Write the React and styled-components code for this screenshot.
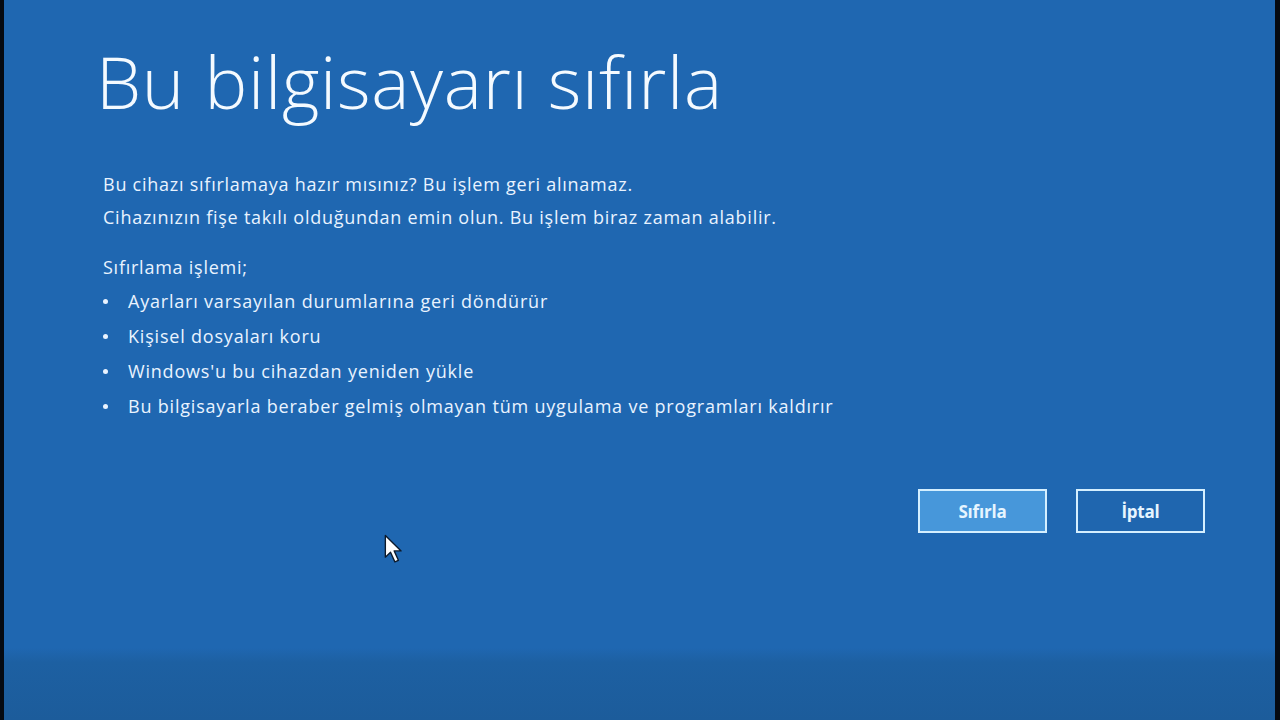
import React from "react";
import styled, { createGlobalStyle } from "styled-components";

const GlobalStyle = createGlobalStyle`
  html, body {
    margin: 0;
    padding: 0;
    background: #000;
  }
  body {
    font-family: "Open Sans", "Noto Sans", sans-serif;
  }
`;

const Frame = styled.div`
  width: 1280px;
  height: 720px;
  display: flex;
  background: #050a12;
  padding: 0 5px 0 4px;
  box-sizing: border-box;
  overflow: hidden;
`;

const Screen = styled.div`
  flex: 1;
  display: flex;
  flex-direction: column;
  background: linear-gradient(
    180deg,
    #1f67b1 0%,
    #1f67b1 90%,
    #1d60a2 92%,
    #1c5c9b 100%
  );
  color: #f2f8ff;
  padding: 36px 0 0 92px;
  position: relative;
`;

const Title = styled.h1`
  margin: 0;
  font-family: "Open Sans", sans-serif;
  font-weight: 300;
  font-size: 72px;
  line-height: 90px;
  letter-spacing: 0.7px;
  color: #f4faff;
`;

const Body = styled.div`
  display: flex;
  flex-direction: column;
  padding-left: 7px;
  margin-top: 42px;
  font-size: 18px;
  color: #e9f3ff;
`;

const Line = styled.p`
  margin: 0;
  line-height: 33px;
  letter-spacing: 0.75px;
`;

const Intro = styled(Line)`
  margin-top: 17px;
`;

const List = styled.ul`
  margin: 0;
  padding: 0;
  list-style: none;
  display: flex;
  flex-direction: column;
`;

const Item = styled.li`
  display: flex;
  align-items: center;
  line-height: 35px;
  letter-spacing: 0.8px;
  &::before {
    content: "";
    flex: none;
    width: 5px;
    height: 5px;
    border-radius: 50%;
    background: #e9f3ff;
    margin: 0 20px 0 0;
  }
`;

const Actions = styled.div`
  display: flex;
  justify-content: flex-end;
  gap: 29px;
  margin: 65px 70px 0 0;
`;

const Button = styled.button`
  width: 129px;
  height: 44px;
  box-sizing: border-box;
  border: 2px solid #d4efff;
  background: ${(p) => (p.$primary ? "#4797da" : "#1f66af")};
  color: #e6f5ff;
  font-family: "Open Sans", sans-serif;
  font-weight: 700;
  font-size: 17px;
  letter-spacing: -0.2px;
  padding: 0;
  cursor: default;
`;

const Pointer = styled.svg`
  position: absolute;
  left: 380px;
  top: 534px;
`;

const items = [
  "Ayarları varsayılan durumlarına geri döndürür",
  "Kişisel dosyaları koru",
  "Windows'u bu cihazdan yeniden yükle",
  "Bu bilgisayarla beraber gelmiş olmayan tüm uygulama ve programları kaldırır",
];

export default function App() {
  return (
    <>
      <GlobalStyle />
      <Frame>
        <Screen>
          <Title>Bu bilgisayarı sıfırla</Title>
          <Body>
            <Line>Bu cihazı sıfırlamaya hazır mısınız? Bu işlem geri alınamaz.</Line>
            <Line>Cihazınızın fişe takılı olduğundan emin olun. Bu işlem biraz zaman alabilir.</Line>
            <Intro>Sıfırlama işlemi;</Intro>
            <List>
              {items.map((t) => (
                <Item key={t}>{t}</Item>
              ))}
            </List>
          </Body>
          <Actions>
            <Button $primary>Sıfırla</Button>
            <Button>İptal</Button>
          </Actions>
          <Pointer width="19" height="30" viewBox="0 0 14 22">
            <path
              d="M1 1 L1 17 L4.8 13.4 L8 20.5 L10.6 19.3 L7.5 12.4 L12.6 12.4 Z"
              fill="#fff"
              stroke="#0d1a2b"
              strokeWidth="1"
              strokeLinejoin="round"
            />
          </Pointer>
        </Screen>
      </Frame>
    </>
  );
}
